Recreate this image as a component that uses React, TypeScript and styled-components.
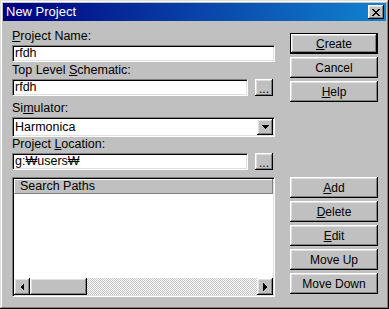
import styled, { createGlobalStyle } from 'styled-components'

const GlobalStyle = createGlobalStyle`
  html, body {
    margin: 0;
    padding: 0;
    background: #c0c0c0;
  }
  body {
    font-family: "Liberation Sans", Arial, sans-serif;
    font-size: 12px;
    color: #000;
  }
`

const Window = styled.div`
  width: 389px;
  height: 309px;
  box-sizing: border-box;
  padding: 3px;
  background: #c0c0c0;
  box-shadow: inset -1px -1px #000, inset 1px 1px #dfdfdf, inset -2px -2px #808080,
    inset 2px 2px #fff;
  display: flex;
  flex-direction: column;
`

const TitleBar = styled.div`
  height: 18px;
  flex: 0 0 18px;
  background: linear-gradient(90deg, #000080, #1084d0);
  display: flex;
  align-items: center;
  justify-content: space-between;
  padding: 0 2px 0 3px;
`

const TitleText = styled.span`
  color: #fff;
  font-size: 13px;
  line-height: 18px;
`

const CloseButton = styled.div`
  width: 16px;
  height: 14px;
  box-sizing: border-box;
  background: #c0c0c0;
  box-shadow: inset -1px -1px #000, inset 1px 1px #fff, inset -2px -2px #808080,
    inset 2px 2px #dfdfdf;
  display: flex;
  align-items: center;
  justify-content: center;
`

const Body = styled.div`
  flex: 1;
  display: flex;
  padding: 8px 8px 9px 9px;
`

const LeftColumn = styled.div`
  width: 263px;
  display: flex;
  flex-direction: column;
  font-size: 12.5px;
`

const Group = styled.div<{ $space: number }>`
  margin-top: ${(p) => p.$space}px;
  display: flex;
  flex-direction: column;
`

const Label = styled.div`
  line-height: 14px;
  height: 14px;
  margin-bottom: 2px;
  white-space: nowrap;
`

const Key = styled.span`
  text-decoration: underline;
  text-underline-offset: 1px;
`

const Row = styled.div`
  display: flex;
  align-items: flex-start;
`

const TextBox = styled.div<{ $h?: number }>`
  flex: 1;
  height: ${(p) => p.$h ?? 17}px;
  box-sizing: border-box;
  background: #fff;
  border: 1px solid;
  border-color: #808080 #fff #fff #808080;
  box-shadow: inset 1px 1px #000, inset -1px -1px #dfdfdf;
  padding: 0 2px;
  line-height: ${(p) => (p.$h ?? 17) - 2}px;
  white-space: nowrap;
  display: flex;
  align-items: center;
  justify-content: space-between;
`

const RaisedButton = styled.div`
  box-sizing: border-box;
  background: #c0c0c0;
  box-shadow: inset -1px -1px #000, inset 1px 1px #fff, inset -2px -2px #808080,
    inset 2px 2px #dfdfdf;
  display: flex;
  align-items: center;
  justify-content: center;
`

const BrowseButton = styled(RaisedButton)`
  width: 18px;
  height: 17px;
  margin-left: 7px;
  margin-right: 2px;
  font-size: 12px;
  line-height: 12px;
  padding-top: 2px;
`

const DropButton = styled(RaisedButton)`
  width: 16px;
  height: 16px;
  margin-right: -1px;
`

const ListBox = styled.div`
  margin-top: 7px;
  flex: 1;
  box-sizing: border-box;
  background: #fff;
  border: 1px solid;
  border-color: #808080 #fff #fff #808080;
  box-shadow: inset 1px 1px #000, inset -1px -1px #dfdfdf;
  padding: 1px;
  display: flex;
  flex-direction: column;
`

const ListHeader = styled.div`
  height: 15px;
  box-sizing: border-box;
  background: #c0c0c0;
  box-shadow: inset -1px -1px #808080, inset 1px 1px #fff;
  padding-left: 6px;
  line-height: 14px;
`

const ListArea = styled.div`
  flex: 1;
`

const ScrollBar = styled.div`
  height: 17px;
  display: flex;
`

const ScrollArrow = styled(RaisedButton)`
  width: 16px;
  height: 17px;
`

const Thumb = styled(RaisedButton)`
  width: 57px;
  height: 17px;
`

const Track = styled.div`
  flex: 1;
  background-image: conic-gradient(#c0c0c0 25%, #fff 0 50%, #c0c0c0 0 75%, #fff 0);
  background-size: 2px 2px;
`

const RightColumn = styled.div`
  width: 88px;
  margin-left: 15px;
  padding-top: 4px;
  padding-bottom: 3px;
  display: flex;
  flex-direction: column;
  justify-content: space-between;
`

const ButtonStack = styled.div`
  display: flex;
  flex-direction: column;
  gap: 3px;
`

const PushButton = styled(RaisedButton)<{ $default?: boolean }>`
  height: 21px;
  line-height: 14px;
  ${(p) =>
    p.$default &&
    `box-shadow: inset 0 0 0 1px #000, inset -2px -2px #000, inset 2px 2px #fff,
      inset -3px -3px #808080, inset 3px 3px #dfdfdf;`}
`

const Arrow = ({ dir }: { dir: 'left' | 'right' | 'down' }) => {
  const pts = {
    left: '5,0 5,8 1,4',
    right: '1,0 1,8 5,4',
    down: '0,1 8,1 4,5',
  }[dir]
  const w = dir === 'down' ? 8 : 6
  const h = dir === 'down' ? 6 : 8
  return (
    <svg width={w} height={h} viewBox={`0 0 ${w} ${h}`} shapeRendering="crispEdges">
      <polygon points={pts} fill="#000" />
    </svg>
  )
}

const CloseGlyph = () => (
  <svg width="8" height="7" viewBox="0 0 8 7" shapeRendering="crispEdges">
    <path
      d="M0 0h2v1h-2zM6 0h2v1h-2zM1 1h2v1h-2zM5 1h2v1h-2zM2 2h4v1h-4zM3 3h2v1h-2zM2 4h4v1h-4zM1 5h2v1h-2zM5 5h2v1h-2zM0 6h2v1h-2zM6 6h2v1h-2z"
      fill="#000"
    />
  </svg>
)

export default function App() {
  return (
    <>
      <GlobalStyle />
      <Window>
        <TitleBar>
          <TitleText>New Project</TitleText>
          <CloseButton>
            <CloseGlyph />
          </CloseButton>
        </TitleBar>
        <Body>
          <LeftColumn>
            <Group $space={0}>
              <Label>
                <Key>P</Key>roject Name:
              </Label>
              <Row>
                <TextBox>rfdh</TextBox>
              </Row>
            </Group>
            <Group $space={1}>
              <Label>
                Top Level <Key>S</Key>chematic:
              </Label>
              <Row>
                <TextBox>rfdh</TextBox>
                <BrowseButton>...</BrowseButton>
              </Row>
            </Group>
            <Group $space={5}>
              <Label>
                Si<Key>m</Key>ulator:
              </Label>
              <Row>
                <TextBox $h={20}>
                  Harmonica
                  <DropButton>
                    <Arrow dir="down" />
                  </DropButton>
                </TextBox>
              </Row>
            </Group>
            <Group $space={0}>
              <Label>
                Project <Key>L</Key>ocation:
              </Label>
              <Row>
                <TextBox>g:₩users₩</TextBox>
                <BrowseButton>...</BrowseButton>
              </Row>
            </Group>
            <ListBox>
              <ListHeader>Search Paths</ListHeader>
              <ListArea />
              <ScrollBar>
                <ScrollArrow>
                  <Arrow dir="left" />
                </ScrollArrow>
                <Thumb />
                <Track />
                <ScrollArrow>
                  <Arrow dir="right" />
                </ScrollArrow>
              </ScrollBar>
            </ListBox>
          </LeftColumn>
          <RightColumn>
            <ButtonStack>
              <PushButton $default>
                <span>
                  <Key>C</Key>reate
                </span>
              </PushButton>
              <PushButton>Cancel</PushButton>
              <PushButton>
                <span>
                  <Key>H</Key>elp
                </span>
              </PushButton>
            </ButtonStack>
            <ButtonStack>
              <PushButton>
                <span>
                  <Key>A</Key>dd
                </span>
              </PushButton>
              <PushButton>
                <span>
                  <Key>D</Key>elete
                </span>
              </PushButton>
              <PushButton>
                <span>
                  <Key>E</Key>dit
                </span>
              </PushButton>
              <PushButton>Move Up</PushButton>
              <PushButton>Move Down</PushButton>
            </ButtonStack>
          </RightColumn>
        </Body>
      </Window>
    </>
  )
}
